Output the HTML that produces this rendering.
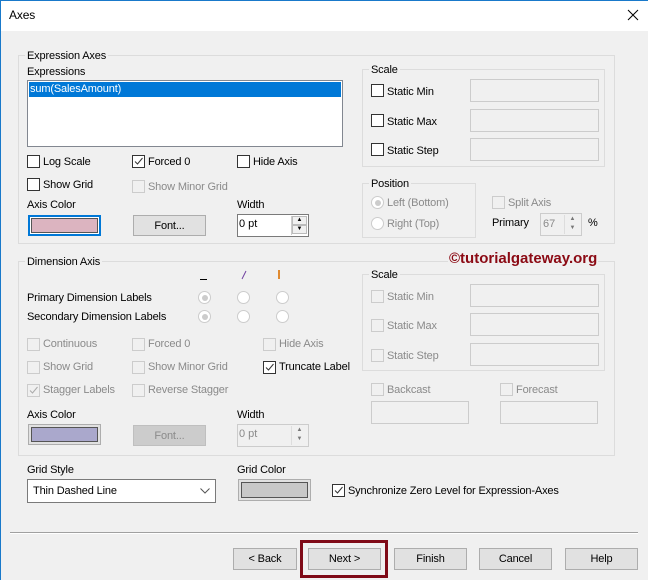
<!DOCTYPE html>
<html><head><meta charset="utf-8"><style>
*{box-sizing:border-box;margin:0;padding:0}
body{width:648px;height:580px;background:#f0f0f0;font-family:"Liberation Sans",sans-serif;font-size:11px;color:#000;position:relative;overflow:hidden}
.a{position:absolute;white-space:nowrap}
.t{position:absolute;white-space:nowrap;line-height:14px;letter-spacing:-0.15px}
.d{color:#8a8a8a}
.g{position:absolute;border:1px solid #dcdcdc}
.gl{position:absolute;background:#f0f0f0;padding:0 2px;line-height:14px;letter-spacing:-0.15px}
.cb{position:absolute;width:13px;height:13px;border:1px solid #333;background:#fff}
.cb.dis{border-color:#ccc;background:#f0f0f0}
.cb svg{position:absolute;left:0;top:0}
.tb{position:absolute;border:1px solid #ccc;background:#f0f0f0}
.btn{position:absolute;border:1px solid #adadad;background:#e1e1e1;text-align:center;line-height:20px;letter-spacing:-0.15px}
.rd{position:absolute;width:13px;height:13px;border-radius:50%;border:1px solid #ccc;background:#fff}
.rd.on::after{content:"";position:absolute;left:2.5px;top:2.5px;width:6px;height:6px;border-radius:50%;background:#ccc}
</style></head><body>
<div class="a" style="left:0;top:0;width:648px;height:31px;background:#fff;border-top:1px solid #1979ca"></div>
<div class="a" style="left:0;top:0;width:1px;height:580px;background:#1979ca"></div>
<div class="t" style="left:9px;top:8px;font-size:12px">Axes</div>
<svg class="a" style="left:627px;top:9px" width="12" height="12"><path d="M1 1L11 11M11 1L1 11" stroke="#000" stroke-width="1"/></svg>

<div class="g" style="left:18px;top:55px;width:597px;height:189px"></div>
<div class="gl" style="left:25px;top:49px">Expression Axes</div>
<div class="t" style="left:27px;top:65px">Expressions</div>
<div class="a" style="left:27px;top:80px;width:316px;height:67px;background:#fff;border:1px solid #828790"></div>
<div class="a" style="left:29px;top:82px;width:312px;height:15px;background:#0078d7;color:#fff;line-height:15px;padding-left:1px;letter-spacing:-0.15px">sum(SalesAmount)</div>

<div class="cb" style="left:27px;top:155px"></div><div class="t" style="left:43px;top:155px">Log Scale</div>
<div class="cb" style="left:132px;top:155px"><svg width="11" height="11"><path d="M2 5.5L4.5 8L9.5 2" stroke="#333" fill="none"/></svg></div><div class="t" style="left:148px;top:155px">Forced 0</div>
<div class="cb" style="left:237px;top:155px"></div><div class="t" style="left:253px;top:155px">Hide Axis</div>
<div class="cb" style="left:27px;top:178px"></div><div class="t" style="left:43px;top:178px">Show Grid</div>
<div class="cb dis" style="left:132px;top:180px"></div><div class="t d" style="left:148px;top:180px">Show Minor Grid</div>
<div class="t" style="left:27px;top:198px">Axis Color</div>
<div class="a" style="left:28px;top:215px;width:73px;height:21px;border:2px solid #0078d7;background:#fff"><div style="margin:1px;height:15px;border:1px solid #555;background:#dcb4c0"></div></div>
<div class="btn" style="left:133px;top:215px;width:73px;height:21px">Font...</div>
<div class="t" style="left:237px;top:198px">Width</div>
<div class="a" style="left:237px;top:214px;width:72px;height:23px;border:1px solid #7a7a7a;background:#fff;line-height:18px;padding-left:1px">0 pt</div>
<div class="a" style="left:291px;top:216px;width:16px;height:19px;border-left:1px solid #ccc"><div style="height:9px;border:1px solid #bbb;background:#f0f0f0;font-size:6px;text-align:center;line-height:7px">▲</div><div style="height:9px;border:1px solid #bbb;background:#f0f0f0;font-size:6px;text-align:center;line-height:7px">▼</div></div>

<div class="g" style="left:362px;top:69px;width:243px;height:98px"></div>
<div class="gl" style="left:369px;top:63px">Scale</div>
<div class="cb" style="left:371px;top:84px"></div><div class="t" style="left:387px;top:85px">Static Min</div>
<div class="tb" style="left:470px;top:79px;width:129px;height:23px"></div>
<div class="cb" style="left:371px;top:114px"></div><div class="t" style="left:387px;top:115px">Static Max</div>
<div class="tb" style="left:470px;top:109px;width:129px;height:23px"></div>
<div class="cb" style="left:371px;top:143px"></div><div class="t" style="left:387px;top:144px">Static Step</div>
<div class="tb" style="left:470px;top:138px;width:129px;height:23px"></div>

<div class="g" style="left:362px;top:183px;width:114px;height:55px"></div>
<div class="gl" style="left:369px;top:177px">Position</div>
<div class="rd on" style="left:371px;top:196px"></div><div class="t d" style="left:387px;top:196px">Left (Bottom)</div>
<div class="rd" style="left:371px;top:217px"></div><div class="t d" style="left:387px;top:217px">Right (Top)</div>
<div class="cb dis" style="left:492px;top:196px"></div><div class="t d" style="left:508px;top:196px">Split Axis</div>
<div class="t" style="left:492px;top:216px">Primary</div>
<div class="a" style="left:540px;top:213px;width:42px;height:23px;border:1px solid #ccc;color:#8a8a8a;line-height:20px;padding-left:2px">67</div>
<div class="a" style="left:564px;top:215px;width:16px;height:19px;font-size:6px;color:#777;text-align:center;line-height:9px;border-left:1px solid #ddd">▲<br>▼</div>
<div class="t" style="left:588px;top:216px">%</div>

<div class="g" style="left:18px;top:261px;width:597px;height:195px"></div>
<div class="gl" style="left:25px;top:255px">Dimension Axis</div>
<div class="a" style="left:200px;top:279px;width:7px;height:1px;background:#000"></div>
<svg class="a" style="left:240px;top:270px" width="8" height="10"><path d="M6 1L2 9" stroke="#7040a0" stroke-width="1"/></svg>
<div class="a" style="left:278px;top:270px;width:2px;height:9px;background:#e08a30"></div>
<div class="t" style="left:27px;top:291px">Primary Dimension Labels</div>
<div class="t" style="left:27px;top:310px">Secondary Dimension Labels</div>
<div class="rd on" style="left:198px;top:291px"></div><div class="rd" style="left:237px;top:291px"></div><div class="rd" style="left:276px;top:291px"></div>
<div class="rd on" style="left:198px;top:310px"></div><div class="rd" style="left:237px;top:310px"></div><div class="rd" style="left:276px;top:310px"></div>

<div class="cb dis" style="left:27px;top:338px"></div><div class="t d" style="left:43px;top:337px">Continuous</div>
<div class="cb dis" style="left:132px;top:338px"></div><div class="t d" style="left:148px;top:337px">Forced 0</div>
<div class="cb dis" style="left:263px;top:338px"></div><div class="t d" style="left:279px;top:337px">Hide Axis</div>
<div class="cb dis" style="left:27px;top:361px"></div><div class="t d" style="left:43px;top:360px">Show Grid</div>
<div class="cb dis" style="left:132px;top:361px"></div><div class="t d" style="left:148px;top:360px">Show Minor Grid</div>
<div class="cb" style="left:263px;top:361px"><svg width="11" height="11"><path d="M2 5.5L4.5 8L9.5 2" stroke="#333" fill="none"/></svg></div><div class="t" style="left:279px;top:360px">Truncate Label</div>
<div class="cb dis" style="left:27px;top:384px"><svg width="11" height="11"><path d="M2 5.5L4.5 8L9.5 2" stroke="#aaa" fill="none"/></svg></div><div class="t d" style="left:43px;top:383px">Stagger Labels</div>
<div class="cb dis" style="left:132px;top:384px"></div><div class="t d" style="left:148px;top:383px">Reverse Stagger</div>
<div class="t" style="left:27px;top:408px">Axis Color</div>
<div class="a" style="left:28px;top:424px;width:73px;height:21px;border:1px solid #adadad;background:#e1e1e1;padding:2px"><div style="height:15px;border:1px solid #555;background:#aaa8cc"></div></div>
<div class="btn d" style="left:133px;top:425px;width:73px;height:21px;border-color:#bfbfbf;background:#cccccc">Font...</div>
<div class="t" style="left:237px;top:408px">Width</div>
<div class="a" style="left:237px;top:424px;width:72px;height:23px;border:1px solid #ccc;color:#8a8a8a;line-height:18px;padding-left:1px">0 pt</div>
<div class="a" style="left:291px;top:426px;width:16px;height:19px;font-size:6px;color:#777;text-align:center;line-height:9px;border-left:1px solid #ddd">▲<br>▼</div>

<div class="g" style="left:362px;top:274px;width:243px;height:97px"></div>
<div class="gl" style="left:369px;top:268px">Scale</div>
<div class="cb dis" style="left:371px;top:290px"></div><div class="t d" style="left:387px;top:290px">Static Min</div>
<div class="tb" style="left:470px;top:284px;width:129px;height:23px"></div>
<div class="cb dis" style="left:371px;top:319px"></div><div class="t d" style="left:387px;top:319px">Static Max</div>
<div class="tb" style="left:470px;top:313px;width:129px;height:23px"></div>
<div class="cb dis" style="left:371px;top:349px"></div><div class="t d" style="left:387px;top:349px">Static Step</div>
<div class="tb" style="left:470px;top:343px;width:129px;height:23px"></div>
<div class="cb dis" style="left:371px;top:383px"></div><div class="t d" style="left:387px;top:383px">Backcast</div>
<div class="cb dis" style="left:500px;top:383px"></div><div class="t d" style="left:516px;top:383px">Forecast</div>
<div class="tb" style="left:371px;top:401px;width:98px;height:23px"></div>
<div class="tb" style="left:500px;top:401px;width:98px;height:23px"></div>
<div class="a" style="left:448px;top:251px;background:#f0f0f0;color:#8b0a14;font-weight:bold;font-size:15px;line-height:16px;padding:0 1px">©tutorialgateway.org</div>

<div class="t" style="left:27px;top:463px">Grid Style</div>
<div class="a" style="left:27px;top:479px;width:189px;height:24px;border:1px solid #7a7a7a;background:#fff;line-height:22px;padding-left:5px;letter-spacing:-0.15px">Thin Dashed Line</div>
<svg class="a" style="left:200px;top:488px" width="10" height="6"><path d="M0.5 0.5L5 5L9.5 0.5" stroke="#555" fill="none"/></svg>
<div class="t" style="left:237px;top:463px">Grid Color</div>
<div class="a" style="left:238px;top:479px;width:73px;height:22px;border:1px solid #adadad;background:#e1e1e1;padding:2px"><div style="height:16px;border:1px solid #555;background:#c8c8c8"></div></div>
<div class="cb" style="left:332px;top:484px"><svg width="11" height="11"><path d="M2 5.5L4.5 8L9.5 2" stroke="#333" fill="none"/></svg></div>
<div class="t" style="left:348px;top:484px">Synchronize Zero Level for Expression-Axes</div>

<div class="a" style="left:10px;top:532px;width:628px;height:1px;background:#a0a0a0"></div>
<div class="a" style="left:10px;top:533px;width:628px;height:1px;background:#fff"></div>
<div class="btn" style="left:233px;top:548px;width:64px;height:22px">&lt; Back</div>
<div class="btn" style="left:308px;top:548px;width:73px;height:22px">Next &gt;</div>
<div class="btn" style="left:394px;top:548px;width:73px;height:22px">Finish</div>
<div class="btn" style="left:479px;top:548px;width:73px;height:22px">Cancel</div>
<div class="btn" style="left:565px;top:548px;width:73px;height:22px">Help</div>
<div class="a" style="left:300px;top:540px;width:88px;height:38px;border:3px solid #7f0a17"></div>
</body></html>
